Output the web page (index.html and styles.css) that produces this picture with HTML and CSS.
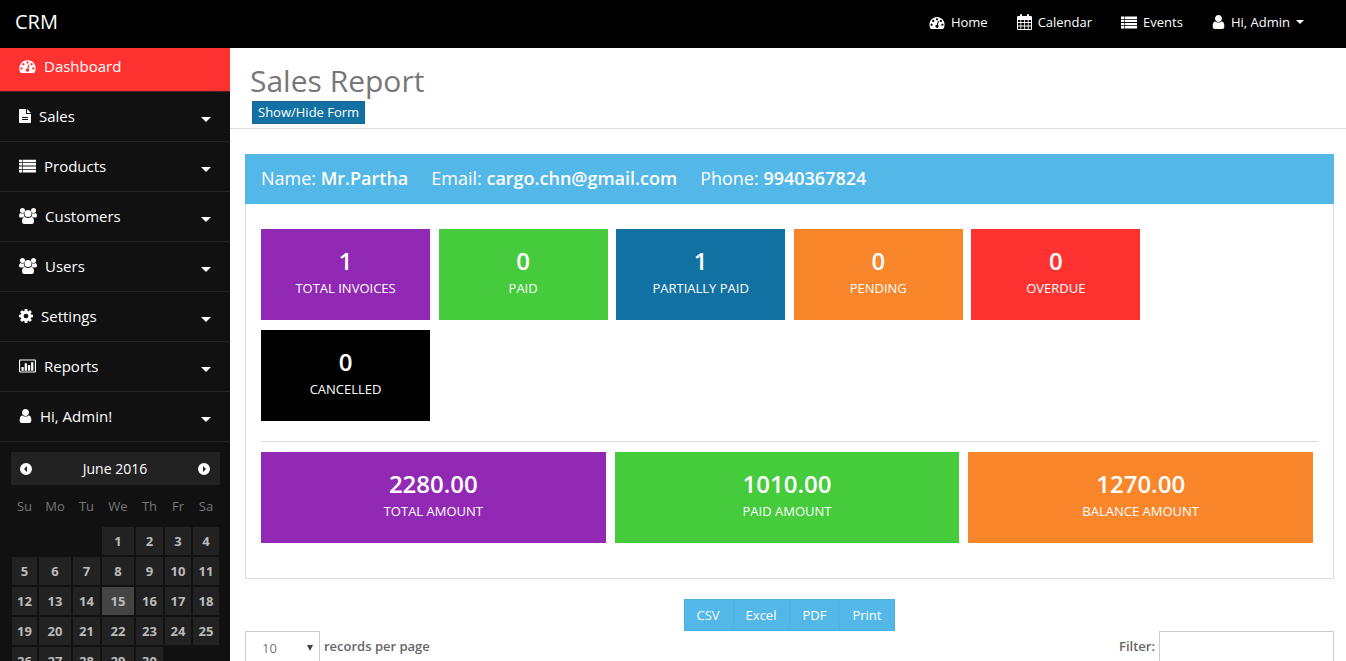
FILE: index.html
```html
<!DOCTYPE html>
<html lang="en">
  <head>
    <meta charset="utf-8">
    <title>CRM - Sales Report</title>
    <link rel="stylesheet" href="styles.css">
  </head>
  <body>
    <!-- icons -->
    <svg class="sprite" aria-hidden="true">
      <symbol id="i-dash" viewBox="0 128 1792 1536"><path d="M384 1152q0-53-37.5-90.5t-90.5-37.5-90.5 37.5-37.5 90.5 37.5 90.5 90.5 37.5 90.5-37.5 37.5-90.5zm192-448q0-53-37.5-90.5t-90.5-37.5-90.5 37.5-37.5 90.5 37.5 90.5 90.5 37.5 90.5-37.5 37.5-90.5zm428 481l101-382q6-26-7.5-48.5t-38.5-29.5-48 6.5-30 39.5l-101 382q-60 5-107 43.5t-63 98.5q-20 77 20 146t117 89 146-20 89-117q16-60-6-117t-72-91zm660-33q0-53-37.5-90.5t-90.5-37.5-90.5 37.5-37.5 90.5 37.5 90.5 90.5 37.5 90.5-37.5 37.5-90.5zm-640-640q0-53-37.5-90.5t-90.5-37.5-90.5 37.5-37.5 90.5 37.5 90.5 90.5 37.5 90.5-37.5 37.5-90.5zm448 192q0-53-37.5-90.5t-90.5-37.5-90.5 37.5-37.5 90.5 37.5 90.5 90.5 37.5 90.5-37.5 37.5-90.5zm320 448q0 261-141 483-19 29-54 29h-1402q-35 0-54-29-141-221-141-483 0-182 71-348t191-286 286-191 348-71 348 71 286 191 191 286 71 348z"/></symbol>
      <symbol id="i-user" viewBox="256 128 1280 1536"><path d="M1536 1399q0 109-62.5 187t-150.5 78h-854q-88 0-150.5-78t-62.5-187q0-85 8.5-160.5t31.5-152 58.5-131 94-89 134.5-34.5q131 128 313 128t313-128q76 0 134.5 34.5t94 89 58.5 131 31.5 152 8.5 160.5zm-256-887q0 159-112.5 271.5t-271.5 112.5-271.5-112.5-112.5-271.5 112.5-271.5 271.5-112.5 271.5 112.5 112.5 271.5z"/></symbol>
      <symbol id="i-cog" viewBox="128 128 1536 1536"><path d="M1152 896q0-106-75-181t-181-75-181 75-75 181 75 181 181 75 181-75 75-181zm512-109v222q0 12-8 23t-20 13l-185 28q-19 54-39 91 35 50 107 138 10 12 10 25t-9 23q-27 37-99 108t-94 71q-12 0-26-9l-138-108q-44 23-91 38-16 136-29 186-7 28-36 28h-222q-14 0-24.5-8.5t-11.5-21.5l-28-184q-49-16-90-37l-141 107q-10 9-25 9-14 0-25-11-126-114-165-168-7-10-7-23 0-12 8-23 15-21 51-66.5t54-70.5q-27-50-41-99l-183-27q-13-2-21-12.5t-8-23.5v-222q0-12 8-23t19-13l186-28q14-46 39-92-40-57-107-138-10-12-10-24 0-10 9-23 26-36 98.5-107.5t94.5-71.5q13 0 26 10l138 107q44-23 91-38 16-136 29-186 7-28 36-28h222q14 0 24.5 8.5t11.5 21.5l28 184q49 16 90 37l142-107q9-9 24-9 13 0 25 10 129 119 165 170 7 8 7 22 0 12-8 23-15 21-51 66.5t-54 70.5q26 50 41 98l183 28q13 2 21 12.5t8 23.5z"/></symbol>
      <symbol id="i-file" viewBox="0 0 12 14"><path fill-rule="evenodd" d="M.7 0H7v4.300q0 .7.700.7H12v8.300q0 .7-.7.7H.7Q0 14 0 13.300V.7Q0 0 .7 0zM8 0l4 4H8zM3 8v1h6V8zM3 10v1h6v-1z"/></symbol>
      <symbol id="i-list" viewBox="0 0 16 12"><path d="M0 0h3v2.400H0zM3.600 0H16v2.400H3.600zM0 3.200h3v2.400H0zM3.600 3.200H16v2.400H3.600zM0 6.400h3v2.400H0zM3.600 6.400H16v2.400H3.600zM0 9.600h3V12H0zM3.600 9.600H16V12H3.600z"/></symbol>
      <symbol id="i-users" viewBox="0 0 18 16"><circle cx="3.500" cy="2.500" r="2.500"/><circle cx="14.500" cy="2.500" r="2.500"/><path d="M1.500 5Q3 6 4.800 5.200 4.600 7.500 6 8.500 4.500 8.600 3.600 9.600H2Q0 9.600 0 8 0 5.300 1.500 5zM16.500 5q-1.500 1-3.300.2.200 2.300-1.200 3.300 1.500.1 2.400 1.100H16q2 0 2-1.600Q18 5.300 16.500 5z"/><circle cx="9" cy="5.500" r="3.500"/><path d="M6 8.900q3 2.200 6 0 3 0 3 4.600 0 2.500-2.300 2.500H5.300Q3 16 3 13.500 3 8.900 6 8.900z"/></symbol>
      <symbol id="i-chart" viewBox="0 0 18 14"><path fill-rule="evenodd" d="M1.200 0h15.600Q18 0 18 1.200v11.600q0 1.200-1.200 1.200H1.200Q0 14 0 12.800V1.200Q0 0 1.200 0zM1.200 1.200v11.600h15.600V1.200zM2.600 8h2.400v4H2.600zM6 4h2.400v8H6zM9.400 6h2.400v6H9.400zM12.800 3h2.400v9h-2.400z"/></symbol>
      <symbol id="i-cal" viewBox="0 0 15 16"><path fill-rule="evenodd" d="M1.200 2H3V1q0-1 1-1t1 1v1h5V1q0-1 1-1t1 1v1h1.800Q15 2 15 3.200v11.600q0 1.200-1.200 1.200H1.200Q0 16 0 14.800V3.200Q0 2 1.200 2zM1 6v2h2.400V6zM4.200 6v2h2.900V6zM7.900 6v2h2.900V6zM11.600 6v2H14V6zM1 9v2.500h2.400V9zM4.200 9v2.500h2.900V9zM7.900 9v2.500h2.900V9zM11.600 9v2.500H14V9zM1 12.400V15h2.400v-2.600zM4.200 12.400V15h2.900v-2.600zM7.900 12.400V15h2.900v-2.600zM11.600 12.400V15H14v-2.600z"/></symbol>
      <symbol id="i-caret" viewBox="0 0 10 5"><path d="M0 0h10L5 5z"/></symbol>
      <symbol id="i-next" viewBox="0 0 12 12"><path fill-rule="evenodd" d="M6 0a6 6 0 0 1 0 12A6 6 0 0 1 6 0zM5 3v6l3-3z"/></symbol>
      <symbol id="i-prev" viewBox="0 0 12 12"><path fill-rule="evenodd" d="M6 0a6 6 0 0 1 0 12A6 6 0 0 1 6 0zM7 3v6L4 6z"/></symbol>
    </svg>

    <header class="navbar">
      <a class="brand" href="#">CRM</a>
      <nav class="top-links">
        <a href="#"><svg class="ic-16"><use href="#i-dash"/></svg>Home</a>
        <a href="#"><svg class="ic-cal"><use href="#i-cal"/></svg>Calendar</a>
        <a href="#"><svg class="ic-16"><use href="#i-list"/></svg>Events</a>
        <a href="#"><svg class="ic-13"><use href="#i-user"/></svg>Hi, Admin<svg class="ic-caret-sm"><use href="#i-caret"/></svg></a>
      </nav>
    </header>

    <div class="page">
      <aside class="sidebar">
        <ul class="menu">
          <li class="active"><a href="#"><svg class="ic-17"><use href="#i-dash"/></svg>Dashboard</a></li>
          <li><a href="#"><svg class="ic-12"><use href="#i-file"/></svg>Sales<svg class="ic-caret"><use href="#i-caret"/></svg></a></li>
          <li><a href="#"><svg class="ic-17"><use href="#i-list"/></svg>Products<svg class="ic-caret"><use href="#i-caret"/></svg></a></li>
          <li><a href="#"><svg class="ic-users"><use href="#i-users"/></svg>Customers<svg class="ic-caret"><use href="#i-caret"/></svg></a></li>
          <li><a href="#"><svg class="ic-users"><use href="#i-users"/></svg>Users<svg class="ic-caret"><use href="#i-caret"/></svg></a></li>
          <li><a href="#"><svg class="ic-14"><use href="#i-cog"/></svg>Settings<svg class="ic-caret"><use href="#i-caret"/></svg></a></li>
          <li><a href="#"><svg class="ic-17"><use href="#i-chart"/></svg>Reports<svg class="ic-caret"><use href="#i-caret"/></svg></a></li>
          <li><a href="#"><svg class="ic-13"><use href="#i-user"/></svg>Hi, Admin!<svg class="ic-caret"><use href="#i-caret"/></svg></a></li>
        </ul>

        <div class="datepicker">
          <div class="dp-head">
            <button type="button" aria-label="Previous month"><svg class="ic-12"><use href="#i-prev"/></svg></button>
            <span>June 2016</span>
            <button type="button" aria-label="Next month"><svg class="ic-12"><use href="#i-next"/></svg></button>
          </div>
          <table class="dp-days">
            <thead>
              <tr><th>Su</th><th>Mo</th><th>Tu</th><th>We</th><th>Th</th><th>Fr</th><th>Sa</th></tr>
            </thead>
            <tbody>
              <tr><td></td><td></td><td></td><td><a href="#">1</a></td><td><a href="#">2</a></td><td><a href="#">3</a></td><td><a href="#">4</a></td></tr>
              <tr><td><a href="#">5</a></td><td><a href="#">6</a></td><td><a href="#">7</a></td><td><a href="#">8</a></td><td><a href="#">9</a></td><td><a href="#">10</a></td><td><a href="#">11</a></td></tr>
              <tr><td><a href="#">12</a></td><td><a href="#">13</a></td><td><a href="#">14</a></td><td><a class="today" href="#">15</a></td><td><a href="#">16</a></td><td><a href="#">17</a></td><td><a href="#">18</a></td></tr>
              <tr><td><a href="#">19</a></td><td><a href="#">20</a></td><td><a href="#">21</a></td><td><a href="#">22</a></td><td><a href="#">23</a></td><td><a href="#">24</a></td><td><a href="#">25</a></td></tr>
              <tr><td><a href="#">26</a></td><td><a href="#">27</a></td><td><a href="#">28</a></td><td><a href="#">29</a></td><td><a href="#">30</a></td><td></td><td></td></tr>
            </tbody>
          </table>
        </div>
      </aside>

      <main class="main">
        <div class="page-head">
          <h1>Sales Report</h1>
          <button type="button" class="btn-form">Show/Hide Form</button>
        </div>

        <div class="content">
          <section class="panel">
            <div class="panel-head">
              <span>Name: <b>Mr.Partha</b></span>
              <span>Email: <b>cargo.chn@gmail.com</b></span>
              <span>Phone: <b>9940367824</b></span>
            </div>
            <div class="panel-body">
              <div class="stats">
                <div class="stat purple"><strong>1</strong><span>TOTAL INVOICES</span></div>
                <div class="stat green"><strong>0</strong><span>PAID</span></div>
                <div class="stat blue"><strong>1</strong><span>PARTIALLY PAID</span></div>
                <div class="stat orange"><strong>0</strong><span>PENDING</span></div>
                <div class="stat red"><strong>0</strong><span>OVERDUE</span></div>
                <div class="stat black"><strong>0</strong><span>CANCELLED</span></div>
              </div>
              <hr>
              <div class="amounts">
                <div class="stat purple"><strong>2280.00</strong><span>TOTAL AMOUNT</span></div>
                <div class="stat green"><strong>1010.00</strong><span>PAID AMOUNT</span></div>
                <div class="stat orange"><strong>1270.00</strong><span>BALANCE AMOUNT</span></div>
              </div>
            </div>
          </section>

          <div class="export">
            <button type="button">CSV</button>
            <button type="button">Excel</button>
            <button type="button">PDF</button>
            <button type="button">Print</button>
          </div>

          <div class="table-tools">
            <div class="tool">
              <select id="length" class="field length">
                <option>10</option>
                <option>25</option>
                <option>50</option>
                <option>100</option>
              </select>
              <label for="length">records per page</label>
            </div>
            <div class="tool">
              <label for="filter">Filter:</label>
              <input id="filter" class="field filter" type="text">
            </div>
          </div>
        </div>
      </main>
    </div>
  </body>
</html>
```
FILE: styles.css
```css
* {
  box-sizing: border-box;
}

body {
  margin: 0;
  font-family: "Open Sans", sans-serif;
  font-size: 13px;
  line-height: 20px;
  color: #666;
  background-color: #fff;
}

a {
  color: inherit;
  text-decoration: none;
}

button {
  font: inherit;
  cursor: pointer;
}

svg {
  fill: currentColor;
  flex: none;
}

.sprite {
  display: none;
}

/* icon sizes */
.ic-12 { width: 12px; height: 14px; }
.ic-13 { width: 13px; height: 14px; }
.ic-14 { width: 14px; height: 14px; }
.ic-16 { width: 16px; height: 13px; }
.ic-17 { width: 17px; height: 14px; }
.ic-cal { width: 15px; height: 16px; }
.ic-users { width: 18px; height: 16px; }
.ic-caret-sm { width: 8px; height: 4px; }
.ic-caret { width: 10px; height: 5px; }

/* top bar */
.navbar {
  display: flex;
  justify-content: space-between;
  align-items: center;
  height: 48px;
  padding: 0 42px 4px 15px;
  background-color: #000;
  color: #fff;
}

.brand {
  font-size: 20px;
}

.top-links {
  display: flex;
  gap: 29px;
}

.top-links a {
  display: flex;
  align-items: center;
  gap: 6px;
}

.page {
  display: flex;
}

/* sidebar */
.sidebar {
  flex: none;
  width: 230px;
  background-color: #111;
  color: #fff;
}

.menu {
  list-style: none;
  margin: 0;
  padding: 0;
}

.menu li {
  border-bottom: 1px solid #262626;
}

.menu a {
  display: flex;
  align-items: center;
  gap: 8px;
  height: 49px;
  padding: 0 19px 2px;
  font-size: 15px;
}

.menu .active {
  border-color: #4a2020;
  background-color: #ff3232;
}

.menu .active a {
  height: 43px;
  padding-bottom: 7px;
}

.menu .ic-caret {
  margin: 8px 0 0 auto;
}

.datepicker {
  padding: 10px 9px 20px 10px;
}

.dp-head {
  display: flex;
  justify-content: space-between;
  align-items: center;
  height: 33px;
  margin: 0 1px;
  padding: 0 10px 0 9px;
  background-color: #222;
  font-size: 14px;
}

.dp-head button {
  display: flex;
  padding: 0;
  border: 0;
  background: none;
  color: #fff;
}

.dp-days {
  width: 100%;
  margin-top: 3px;
  border-spacing: 2px;
}

.dp-days th {
  height: 35px;
  padding: 0 0 4px;
  font-weight: normal;
  color: #777;
}

.dp-days td {
  padding: 0;
}

.dp-days th:nth-child(1) { width: 25px; }
.dp-days th:nth-child(2) { width: 32px; }
.dp-days th:nth-child(3) { width: 27px; }
.dp-days th:nth-child(4) { width: 32px; }
.dp-days th:nth-child(5) { width: 27px; }
.dp-days th:nth-child(6) { width: 26px; }

.dp-days a {
  display: block;
  line-height: 28px;
  text-align: center;
  font-weight: bold;
  color: #bbb;
  background-color: #222;
}

.dp-days .today {
  background-color: #444;
}

/* main */
.main {
  flex: 1;
  min-width: 0;
}

.page-head {
  display: flex;
  flex-direction: column;
  align-items: flex-start;
  height: 81px;
  padding: 16px 20px 0;
  border-bottom: 1px solid #ddd;
}

.page-head h1 {
  margin: 0;
  padding-bottom: 4px;
  font-size: 30px;
  font-weight: normal;
  line-height: 33px;
  color: #777;
}

.btn-form {
  margin-left: 2px;
  padding: 0 5px;
  border: 1px solid #1a6593;
  background-color: #1171a3;
  color: #fff;
  line-height: 21px;
}

.content {
  padding: 25px 12px 20px 15px;
}

.panel {
  border: 1px solid #ddd;
  border-top: 0;
}

.panel-head {
  display: flex;
  gap: 23px;
  margin: 0 -1px;
  padding: 0 16px 2px;
  background-color: #53b7e8;
  color: #fff;
  font-size: 18px;
  line-height: 48px;
}

.panel-head b {
  font-weight: 600;
}

.panel-body {
  padding: 25px 15px 35px;
}

.stats {
  display: grid;
  grid-template-columns: repeat(5, 16%);
  gap: 10px 0.8%;
}

.amounts {
  display: flex;
  gap: 9px;
  padding-right: 5px;
}

.amounts .stat {
  flex: 1;
}

.stat {
  display: flex;
  flex-direction: column;
  align-items: center;
  padding: 18px 10px 21px;
  color: #fff;
}

.stat strong {
  padding-bottom: 2px;
  font-size: 24px;
  font-weight: 600;
  line-height: 28px;
}

.stat span {
  line-height: 22px;
}

.purple { background-color: #9229b4; }
.green { background-color: #45cb3c; }
.blue { background-color: #1171a3; }
.orange { background-color: #f9862b; }
.red { background-color: #ff3232; }
.black { background-color: #000; }

hr {
  margin: 20px 0 10px;
  border: 0;
  border-top: 1px solid #ddd;
}

.export {
  display: flex;
  justify-content: center;
  margin-top: 20px;
}

.export button {
  padding: 5px 13px 5px 12px;
  border: 1px solid #4db0e0;
  border-left-width: 0;
  background-color: #53b7e8;
  color: #fff;
}

.export button:first-child {
  border-left-width: 1px;
}

.table-tools {
  display: flex;
  justify-content: space-between;
}

.tool {
  display: flex;
  gap: 4px;
}

.tool label {
  font-weight: 600;
  line-height: 31px;
}

.field {
  height: 34px;
  border: 1px solid #ccc;
  border-radius: 0;
  background-color: #fff;
  font: inherit;
  color: #777;
}

.length {
  width: 75px;
  padding: 0 16px;
  appearance: none;
  background: #fff url("data:image/svg+xml,%3Csvg xmlns='http://www.w3.org/2000/svg' viewBox='0 0 6 6'%3E%3Cpath d='M0 0h6L3 6z' fill='%23444'/%3E%3C/svg%3E") no-repeat right 6px center / 6px 6px;
}

.filter {
  width: 175px;
  padding: 6px 12px;
}
```
